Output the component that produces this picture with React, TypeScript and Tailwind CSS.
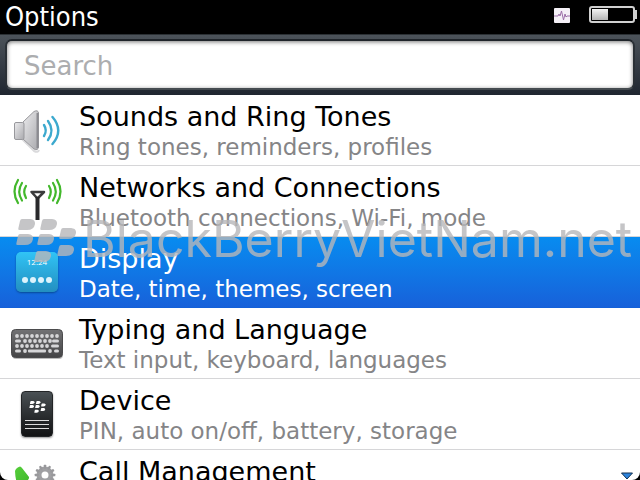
import type { ReactNode } from "react";

function SpeakerIcon() {
  return (
    <svg viewBox="0 0 54 54" className="w-[54px] h-[54px]" fill="none">
      <defs>
        <linearGradient id="cone" x1="0" y1="0" x2="1" y2="1">
          <stop offset="0" stopColor="#ececee" />
          <stop offset="1" stopColor="#a9a9ad" />
        </linearGradient>
      </defs>
      <path d="M12 36 L24 48 Q28 50 29 47" stroke="#dadadc" strokeWidth="2" />
      <path d="M13 19 L24 8.500 Q28 6.500 28.500 10 V44 Q28 48 24 46 L13 36Z" fill="url(#cone)" stroke="#98989c" />
      <rect x="4.500" y="19.500" width="9.500" height="17" rx="1.500" fill="url(#cone)" stroke="#98989c" />
      <path d="M27.500 10 V45" stroke="#8b8b90" strokeWidth="2" />
      <g stroke="#3ca9ce" strokeWidth="2.400" strokeLinecap="round">
        <path d="M34 22 Q37.500 27.500 34 33" />
        <path d="M38 18 Q45 27.500 38 37" />
        <path d="M42.500 14 Q54 27.500 42.500 41" />
      </g>
    </svg>
  );
}

function AntennaIcon() {
  return (
    <svg viewBox="0 0 54 54" className="w-[54px] h-[54px]" fill="none">
      <path d="M21.500 18 H34 L27.500 24.500Z" stroke="#3b3b3d" strokeWidth="2.500" strokeLinejoin="round" />
      <path d="M27.500 23 V46" stroke="#29292b" strokeWidth="4" />
      <g stroke="#42b82b" strokeWidth="2.200" strokeLinecap="round">
        <path d="M16 12 Q12.500 17.500 16 24" />
        <path d="M12 9 Q6.500 17.500 12 26.500" />
        <path d="M8 6 Q1 17.500 8 29" />
        <path d="M39 12 Q42.500 17.500 39 24" />
        <path d="M43 9 Q48.500 17.500 43 26.500" />
        <path d="M47 6 Q54 17.500 47 29" />
      </g>
    </svg>
  );
}

function DisplayIcon() {
  return (
    <div className="flex h-[40px] w-[42px] flex-col items-center justify-between rounded-[5px] bg-linear-to-b from-[#31c4f6] to-[#238fc0] pt-1 pb-[9px] shadow-[0_1px_2px_#064a95]">
      <span className="font-['Open_Sans',sans-serif] text-[8px] leading-[12px] text-white">12:24</span>
      <div className="flex gap-[2px]">
        {[0, 1, 2, 3].map((dot) => (
          <i key={dot} className="size-[6px] rounded-full bg-[#dcf3fc]" />
        ))}
      </div>
    </div>
  );
}

function KeyboardIcon() {
  const keys: number[][] = [
    [15, 20, 25, 30, 35, 40, 45, 50, 55],
    [23, 28, 33, 38, 43, 48],
    [15, 20, 25, 30, 35, 40, 45],
  ];
  return (
    <svg viewBox="0 0 54 32" className="mt-[2px] h-[32px] w-[54px]">
      <defs>
        <linearGradient id="board" x1="0" y1="0" x2="0" y2="1">
          <stop offset="0" stopColor="#727274" />
          <stop offset="1" stopColor="#444446" />
        </linearGradient>
      </defs>
      <rect x="2" y="3" width="51" height="28" rx="4" fill="#bbbbbb" />
      <rect x="1.500" y="1.500" width="51" height="28" rx="4" fill="url(#board)" stroke="#4b4b4d" />
      <g fill="#d6d6d8">
        {keys[0].map((x) => <circle key={x} cx={x - 8} cy="8" r="1.900" />)}
        {keys[1].map((x) => <circle key={x} cx={x - 8} cy="13" r="1.900" />)}
        {keys[2].map((x) => <circle key={x} cx={x - 8} cy="18" r="1.900" />)}
        <rect x="5" y="11.500" width="6" height="3" rx="1.500" />
        <rect x="42" y="11.500" width="7" height="3" rx="1.500" />
        <rect x="41" y="16.500" width="8" height="3" rx="1.500" />
        <rect x="5" y="21.500" width="6" height="3" rx="1.500" />
        <circle cx="15" cy="23" r="1.900" />
        <rect x="18" y="21.500" width="18" height="3" rx="1" />
        <circle cx="40" cy="23" r="1.900" />
        <rect x="44" y="21.500" width="5" height="3" rx="1.500" />
      </g>
    </svg>
  );
}

// Seven lobes of the BlackBerry mark, on a 60 x 44 grid
function BerryMark({ className }: { className: string }) {
  const lobes = [
    [2, 0], [24, 0],
    [0, 15], [21, 15], [43, 9],
    [41, 26], [18, 32],
  ];
  return (
    <svg viewBox="0 0 60 44" className={className} fill="currentColor">
      {lobes.map(([x, y]) => (
        <path key={`${x}-${y}`} transform={`translate(${x} ${y})`} d="M4 0 H12 Q17.500 0.500 17 5 Q16 11 9 11 H1.500 Q0 11 0.300 9.500 L2 2 Q2.500 0 4 0Z" />
      ))}
    </svg>
  );
}

function DeviceIcon() {
  return (
    <div className="flex h-[46px] w-[32px] flex-col items-center justify-between rounded-[4px] border border-[#222426] bg-linear-to-b from-[#4a5054] to-[#121314] pt-[9px] pb-[7px] shadow-[0_1px_2px_#999999]">
      <BerryMark className="h-[12px] w-[17px] text-white" />
      <div className="flex w-[24px] flex-col gap-[3px]">
        {[0, 1, 2].map((line) => (
          <i key={line} className="h-px bg-[#dddddd]" />
        ))}
      </div>
    </div>
  );
}

function CallIcon() {
  return (
    <svg viewBox="0 0 54 54" className="h-[54px] w-[54px]">
      <defs>
        <linearGradient id="handset" x1="0" y1="0" x2="1" y2="1">
          <stop offset="0" stopColor="#55cf3a" />
          <stop offset="1" stopColor="#23901a" />
        </linearGradient>
      </defs>
      <path d="M5 13 Q6 9.500 10 8.500 Q11 8.500 12 10 L19 19 Q19.500 21 16 24 Q22 34 32 38 L38 35 L46 44 Q43 50 35 49 Q6 42 5 13Z" fill="url(#handset)" />
      <g transform="translate(35 17)">
        <circle r="6" fill="none" stroke="#a0a0a3" strokeWidth="5" />
        {[0, 30, 60, 90, 120, 150, 180, 210, 240, 270, 300, 330].map((angle) => (
          <rect key={angle} x="-1.200" y="-10.300" width="2.400" height="4" rx="0.500" fill="#98989b" transform={`rotate(${angle})`} />
        ))}
      </g>
    </svg>
  );
}

interface OptionItem {
  title: string;
  detail: string;
  icon: ReactNode;
  selected?: boolean;
}

const options: OptionItem[] = [
  { title: "Sounds and Ring Tones", detail: "Ring tones, reminders, profiles", icon: <SpeakerIcon /> },
  { title: "Networks and Connections", detail: "Bluetooth connections, Wi-Fi, mode", icon: <AntennaIcon /> },
  { title: "Display", detail: "Date, time, themes, screen", icon: <DisplayIcon />, selected: true },
  { title: "Typing and Language", detail: "Text input, keyboard, languages", icon: <KeyboardIcon /> },
  { title: "Device", detail: "PIN, auto on/off, battery, storage", icon: <DeviceIcon /> },
  { title: "Call Management", detail: "", icon: <CallIcon /> },
];

function OptionRow({ title, detail, icon, selected }: OptionItem) {
  return (
    <li>
      <button
        type="button"
        className={`flex h-[71px] w-full items-center border-b text-left ${
          selected ? "border-[#1460d8] bg-linear-to-b from-[#078cf0] to-[#1761da] text-white" : "border-[#d6d6d8] text-black"
        }`}
      >
        <span className="flex w-[74px] shrink-0 justify-center">{icon}</span>
        <span className="flex h-full flex-col pl-[5px] pt-[5px]">
          <span className="text-[27px] leading-[33px] whitespace-nowrap">{title}</span>
          <span className={`text-[23px] leading-[28px] whitespace-nowrap ${selected ? "text-white" : "text-[#858587]"}`}>
            {detail}
          </span>
        </span>
      </button>
    </li>
  );
}

function StatusBar() {
  return (
    <header className="flex h-[34px] shrink-0 items-center justify-between bg-black pl-[5px] pr-[3px] text-white">
      <h1 className="font-['DejaVu_Sans_Condensed','DejaVu_Sans',sans-serif] text-[27px] leading-[32px]">Options</h1>
      <div className="flex items-center gap-[19px] pb-1">
        <svg viewBox="0 0 16 15" className="h-[15px] w-[16px]" fill="none">
          <rect width="16" height="15" rx="1" fill="#f4f0f6" />
          <path d="M0 8 H4 L5 6 L6 8 L7.500 3 L9.500 12 L11 6 L12 9 L13 8 H16" stroke="#9b6fa8" />
        </svg>
        <svg viewBox="0 0 48 18" className="h-[18px] w-[48px]">
          <defs>
            <linearGradient id="charge" x1="0" y1="0" x2="0" y2="1">
              <stop offset="0" stopColor="#f4f4f4" />
              <stop offset="1" stopColor="#b5b5b5" />
            </linearGradient>
          </defs>
          <rect x="1" y="1" width="44" height="15" rx="2" fill="none" stroke="#d0d0d0" strokeWidth="2" />
          <rect x="46" y="4" width="2" height="9" fill="#d0d0d0" />
          <rect x="3" y="3" width="16" height="11" fill="url(#charge)" />
        </svg>
      </div>
    </header>
  );
}

export default function App() {
  return (
    <div className="h-screen bg-black font-['DejaVu_Sans',sans-serif]">
      <div className="relative flex h-full flex-col overflow-hidden rounded-b-[8px] bg-white">
        <StatusBar />
        <div className="shrink-0 border-t border-[#2b3034] bg-linear-to-b from-[#4c535a] to-[#1f2630] px-[5px] pt-[4px] pb-[5px]">
          <input
            type="text"
            aria-label="Search"
            placeholder="Search"
            className="block h-[51px] w-full rounded-[7px] border-2 border-t-[#20252b] border-x-[#2a3036] border-b-[#454b50] bg-white px-[17px] pt-[2px] text-[26px] text-black shadow-[inset_0_1px_4px_#777777] outline-none placeholder:text-[#acadaf]"
          />
        </div>
        <ul className="min-h-0 flex-1 overflow-hidden">
          {options.map((option) => (
            <OptionRow key={option.title} {...option} />
          ))}
        </ul>

        {/* Site watermark */}
        <div className="pointer-events-none absolute top-[219px] left-[16px] flex items-start text-[#b7b7ba] opacity-80">
          <BerryMark className="h-[44px] w-[60px]" />
          <span className="pl-[7px] font-['Inter',sans-serif] text-[50px] leading-[40px]">BlackBerryVietNam.net</span>
        </div>

        <svg viewBox="0 0 12 8" className="absolute right-[7px] bottom-0 h-[8px] w-[12px]">
          <path d="M0.500 1 H11.500 L6 7Z" fill="#2c83dc" stroke="#123050" />
        </svg>
      </div>
    </div>
  );
}
